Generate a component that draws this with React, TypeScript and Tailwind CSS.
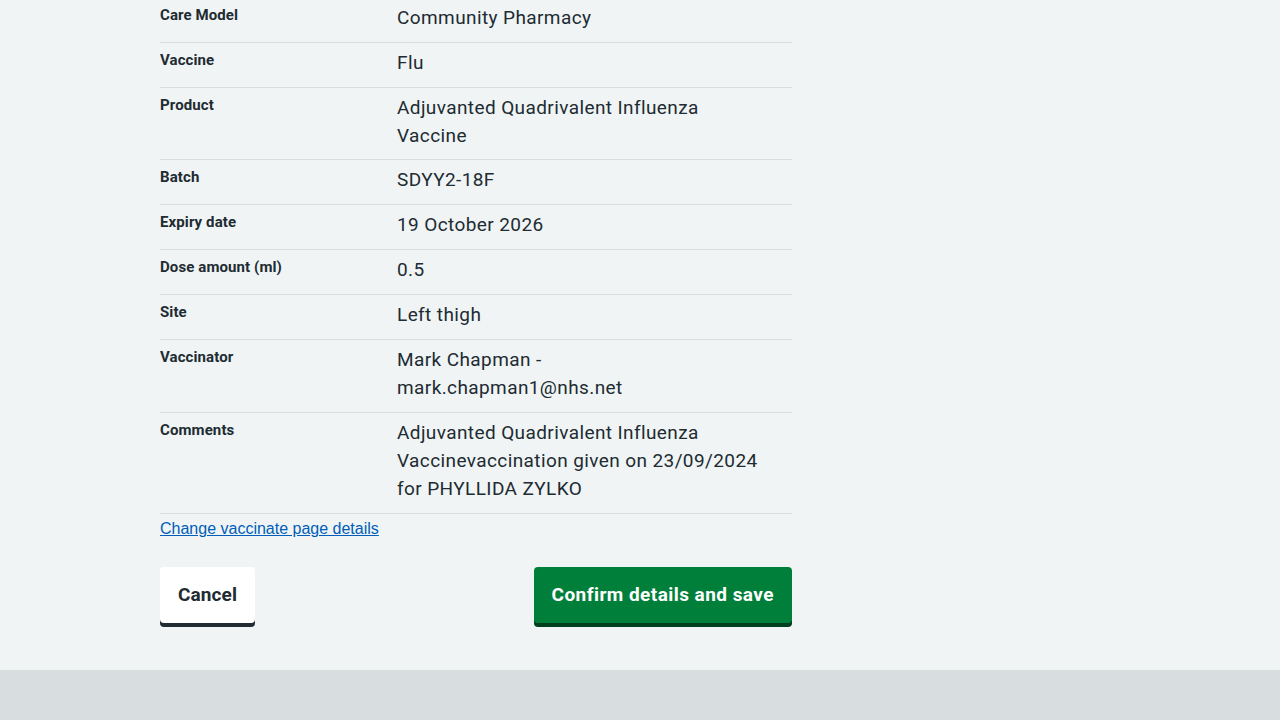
import React from "react";

const rows: { k: string; v: string[]; tight?: boolean }[] = [
  { k: "Care Model", v: ["Community Pharmacy"] },
  { k: "Vaccine", v: ["Flu"] },
  { k: "Product", v: ["Adjuvanted Quadrivalent Influenza", "Vaccine"], tight: true },
  { k: "Batch", v: ["SDYY2-18F"] },
  { k: "Expiry date", v: ["19 October 2026"] },
  { k: "Dose amount (ml)", v: ["0.5"] },
  { k: "Site", v: ["Left thigh"] },
  { k: "Vaccinator", v: ["Mark Chapman -", "mark.chapman1@nhs.net"] },
  {
    k: "Comments",
    v: [
      "Adjuvanted Quadrivalent Influenza",
      "Vaccinevaccination given on 23/09/2024",
      "for PHYLLIDA ZYLKO",
    ],
  },
];

export default function App() {
  return (
    <div
      className="min-h-[720px] bg-[#f0f4f5] text-[#212b32] flex flex-col"
      style={{ fontFamily: "Roboto, 'Liberation Sans', sans-serif" }}
    >
      <main className="w-[632px] ml-[160px] mt-[-2px] flex flex-col">
        <dl className="flex flex-col">
          {rows.map((r) => (
            <div key={r.k} className="flex border-b border-[#d8dde0]">
              <dt className="w-[237px] shrink-0 pt-[5px] pb-[11px] text-[15px] leading-[24px] font-bold tracking-[0.1px]">
                {r.k}
              </dt>
              <dd
                className={`flex-1 pr-[14px] pt-[6px] text-[19px] leading-[28px] tracking-[0.4px] ${
                  r.tight ? "pb-[9px]" : "pb-[10px]"
                }`}
              >
                {r.v.map((line) => (
                  <span key={line} className="block whitespace-nowrap">
                    {line}
                  </span>
                ))}
              </dd>
            </div>
          ))}
        </dl>
        <a
          href="#"
          className="mt-[5px] self-start text-[16px] leading-[20px] text-[#005eb8] underline"
          style={{ fontFamily: "'Liberation Sans', Arial, sans-serif" }}
        >
          Change vaccinate page details
        </a>
        <div className="flex justify-between mt-[28px]">
          <button className="h-[56px] px-[18px] bg-white rounded-[4px] shadow-[0_4px_0_#212b32] text-[19px] font-bold tracking-[0.1px] text-[#212b32]">
            Cancel
          </button>
          <button className="h-[56px] px-[18px] bg-[#007f3b] rounded-[4px] shadow-[0_4px_0_#00401e] text-[19px] font-bold tracking-[0.45px] text-white">
            Confirm details and save
          </button>
        </div>
      </main>
      <div className="mt-[47px] flex-1 bg-[#d8dde0] min-h-[50px]" />
    </div>
  );
}
